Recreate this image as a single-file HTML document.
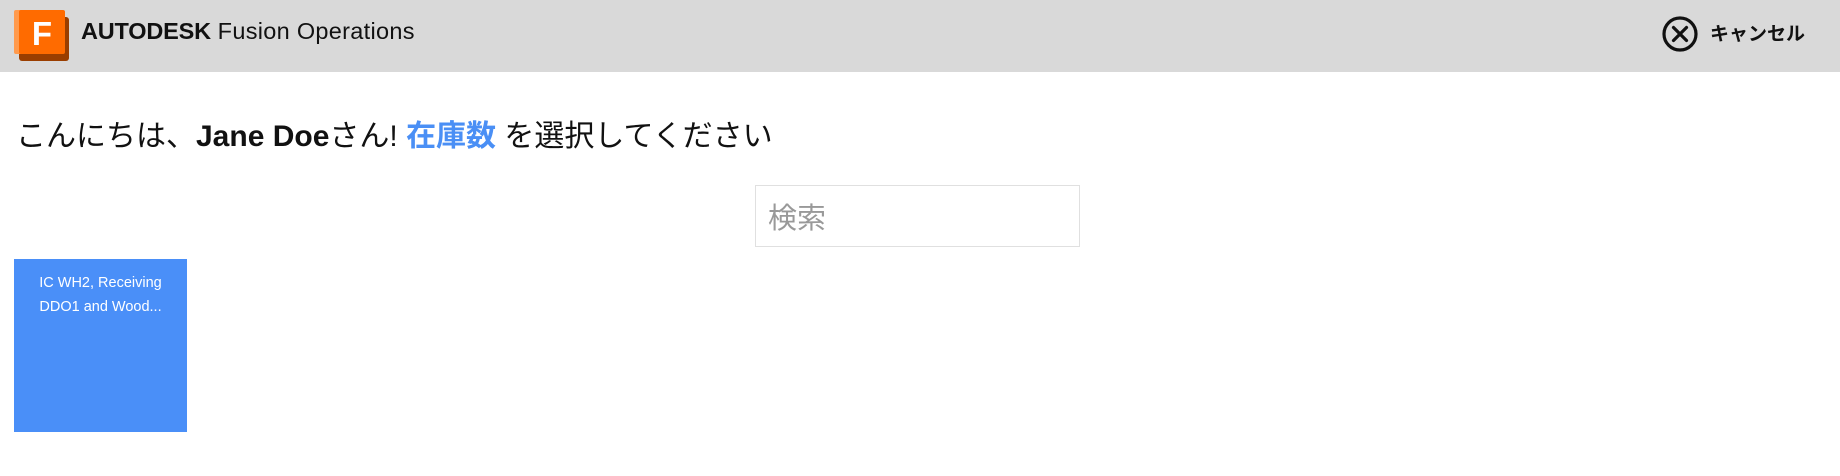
<!DOCTYPE html>
<html><head><meta charset="utf-8"><style>
*{margin:0;padding:0;box-sizing:border-box}
body{width:1840px;height:476px;background:#fff;font-family:"Liberation Sans","Noto Sans CJK JP",sans-serif;position:relative;overflow:hidden}
.hdr{position:absolute;left:0;top:0;width:1840px;height:72px;background:#d9d9d9}
.brand{position:absolute;left:81px;top:18px;font-size:23.5px;color:#111;white-space:nowrap;letter-spacing:0.3px}
.brand b{font-weight:900;letter-spacing:-0.2px}
.cancel{position:absolute;left:1710px;top:21px;font-size:19px;font-weight:bold;color:#111;font-family:"Noto Sans CJK JP",sans-serif;line-height:24px}
.greet{position:absolute;left:16px;top:117px;font-size:30px;color:#111;white-space:nowrap;font-family:"Liberation Sans","Noto Sans CJK JP",sans-serif;line-height:40px;letter-spacing:0}
.greet b{font-weight:bold}
.blue{color:#4a8ff5;font-weight:bold}
.search{position:absolute;left:755px;top:185px;width:325px;height:62px;border:1.5px solid #e0e0e0;font-size:29px;color:#999;padding:10px 0 0 12px;font-family:"Noto Sans CJK JP",sans-serif;line-height:40px}
.tile{position:absolute;left:14px;top:259px;width:173px;height:173px;background:#4a8ff8;color:#fff;font-size:14.5px;text-align:center;padding-top:12px;line-height:24px}
</style></head><body>
<div class="hdr">
<svg style="position:absolute;left:14px;top:9px" width="56" height="52" viewBox="0 0 56 52">
<rect x="5" y="8" width="50" height="44" rx="3" fill="#9a3e00"/>
<rect x="0" y="1" width="10" height="44" rx="2" fill="#ff9a4d"/>
<rect x="5" y="1" width="46" height="44" rx="2" fill="#ff6b00"/>
<text x="28" y="36" font-family="Liberation Sans" font-weight="bold" font-size="33" fill="#fff" text-anchor="middle">F</text>
</svg>
<div class="brand"><b>AUTODESK</b> Fusion Operations</div>
<svg style="position:absolute;left:1661px;top:15px" width="38" height="38" viewBox="0 0 38 38">
<circle cx="19" cy="19" r="16" fill="none" stroke="#111" stroke-width="3.2"/>
<path d="M12.5 12.5L25.5 25.5M25.5 12.5L12.5 25.5" stroke="#111" stroke-width="3.2" stroke-linecap="round"/>
</svg>
<div class="cancel">キャンセル</div>
</div>
<div class="greet">こんにちは、<b>Jane Doe</b>さん! <span class="blue">在庫数</span> を選択してください</div>
<div class="search">検索</div>
<div class="tile">IC WH2, Receiving<br>DDO1 and Wood...</div>
</body></html>
